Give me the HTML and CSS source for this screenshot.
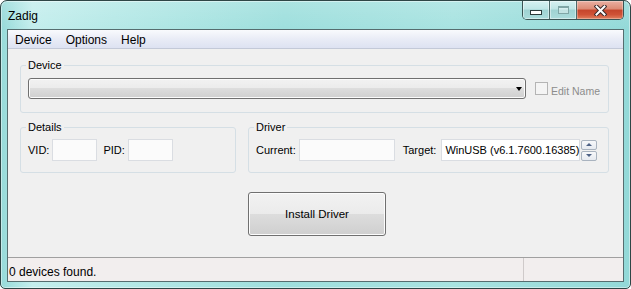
FILE: index.html
```html
<!DOCTYPE html>
<html>
<head>
<meta charset="utf-8">
<title>Zadig</title>
<link rel="stylesheet" href="styles.css">
</head>
<body>
<div class="window">
	<div class="titlebar">
		<span class="title">Zadig</span>
		<div class="caption">
			<span class="cbtn min"><i></i></span>
			<span class="cbtn max"><i></i></span>
			<span class="cbtn close">
				<svg width="13" height="11" viewBox="0 0 13 11">
					<path d="M2.5 1.5 L10.5 9.5 M10.5 1.5 L2.5 9.5" stroke="#3a2a2a" stroke-width="4" stroke-linecap="square"/>
					<path d="M2.5 1.5 L10.5 9.5 M10.5 1.5 L2.5 9.5" stroke="#fff" stroke-width="2" stroke-linecap="square"/>
				</svg>
			</span>
		</div>
	</div>
	<div class="client">
		<div class="menubar">
			<span class="menu-item">Device</span>
			<span class="menu-item">Options</span>
			<span class="menu-item">Help</span>
		</div>
		<div class="content">
			<fieldset class="grp grp-device">
				<legend>Device</legend>
				<div class="row">
					<div class="combo"><span class="arrow"></span></div>
					<label class="chk"><span class="chk-box"></span><span class="chk-text">Edit Name</span></label>
				</div>
			</fieldset>
			<div class="grp-row">
				<fieldset class="grp grp-details">
					<legend>Details</legend>
					<div class="row">
						<span class="lbl">VID:</span>
						<span class="edit edit-id"></span>
						<span class="lbl lbl-pid">PID:</span>
						<span class="edit edit-id"></span>
					</div>
				</fieldset>
				<fieldset class="grp grp-driver">
					<legend>Driver</legend>
					<div class="row">
						<span class="lbl">Current:</span>
						<span class="edit edit-current"></span>
						<span class="lbl lbl-target">Target:</span>
						<span class="edit edit-target">WinUSB (v6.1.7600.16385)</span>
						<span class="spin">
							<span class="spin-btn"><i class="up"></i></span>
							<span class="spin-btn"><i class="down"></i></span>
						</span>
					</div>
				</fieldset>
			</div>
			<div class="actions"><button class="btn">Install Driver</button></div>
		</div>
		<div class="statusbar">
			<span class="status-text">0 devices found.</span>
			<span class="status-pane"></span>
		</div>
	</div>
</div>
</body>
</html>
```

FILE: styles.css
```css
*{
	box-sizing:border-box;
	}
body{
	margin:0;
	background:#fff;
	font-family:"Liberation Sans", Arial, sans-serif;
	font-size:11px;
	color:#000;
	}
.window{
	width:631px;
	height:289px;
	display:flex;
	flex-direction:column;
	border:1px solid #2e4646;
	border-radius:7px 7px 5px 5px;
	box-shadow:inset 0 0 0 1px rgba(255,255,255,.45);
	background:
		linear-gradient(to bottom, rgba(255,255,255,.15), rgba(255,255,255,0) 28px),
		linear-gradient(to right, #96dad9 0%, #c4eeed 5%, #b6e9e7 18%, #9edfdd 45%, #a8e3e1 72%, #93d9d8 100%);
	}

/* title bar */
.titlebar{
	height:28px;
	flex:none;
	display:flex;
	justify-content:space-between;
	align-items:flex-start;
	}
.title{
	font-size:12px;
	line-height:14px;
	padding:8px 0 0 7px;
	color:#000;
	}
.caption{
	display:flex;
	height:19px;
	margin-right:6px;
	border:1px solid #3b5454;
	border-top:0;
	border-radius:0 0 5px 5px;
	overflow:hidden;
	}
.cbtn{
	height:18px;
	display:flex;
	justify-content:center;
	}
.min,.max{
	width:27px;
	border-right:1px solid #4d6a6a;
	background:linear-gradient(#d6f1f1, #bfe6e6 45%, #9fd2d2 50%, #abdcdc 100%);
	box-shadow:inset 0 0 0 1px rgba(255,255,255,.45);
	}
.min i{
	width:12px;
	height:5px;
	margin-top:9px;
	background:#fff;
	border:1px solid #2b3a3a;
	}
.max i{
	width:11px;
	height:8px;
	margin-top:5px;
	border:1px solid #7fa6a6;
	border-top-width:2px;
	background:rgba(255,255,255,.35);
	}
.close{
	width:46px;
	align-items:center;
	background:linear-gradient(#eab0a2, #dc8a74 45%, #c5452b 50%, #cf5236 75%, #e0805f 100%);
	box-shadow:inset 0 0 0 1px rgba(255,255,255,.3);
	}

/* client area */
.client{
	flex:1;
	margin:0 6px 6px;
	border:1px solid #566d6f;
	background:#f0f0f0;
	display:flex;
	flex-direction:column;
	}
.menubar{
	height:19px;
	flex:none;
	display:flex;
	padding-top:2px;
	font-size:12px;
	line-height:16px;
	background:linear-gradient(#f9fafd, #e9ecf6 50%, #dde2f2);
	border-bottom:1px solid #c3c9d8;
	}
.menu-item{
	padding:0 7px;
	}
.content{
	flex:1;
	padding:9px 14px 0 12px;
	}

/* group boxes */
.grp{
	margin:0;
	padding:6px 7px 13px;
	border:1px solid #d5dfe5;
	border-radius:3px;
	min-width:0;
	}
.grp legend{
	padding:0 2px;
	margin-left:-2px;
	font-size:11px;
	line-height:14px;
	}
.grp-row{
	display:flex;
	gap:12px;
	margin-top:7px;
	}
.grp-details,.grp-driver{
	padding:5px 7px 11px;
	}
.grp-details{
	width:216px;
	}
.grp-driver{
	width:361px;
	}
.row{
	display:flex;
	align-items:center;
	}

/* device combo */
.combo{
	width:498px;
	height:21px;
	flex:none;
	display:flex;
	align-items:center;
	justify-content:flex-end;
	padding-right:3px;
	border:1px solid #707070;
	border-radius:3px;
	background:linear-gradient(#f2f2f2, #ebebeb 50%, #dddddd 50%, #cfcfcf);
	box-shadow:inset 0 0 0 1px #fbfbfb;
	}
.arrow{
	width:0;
	height:0;
	border-left:3.5px solid transparent;
	border-right:3.5px solid transparent;
	border-top:4px solid #000;
	margin-top:1px;
	}
.chk{
	display:flex;
	align-items:center;
	margin-left:9px;
	white-space:nowrap;
	}
.chk-box{
	width:13px;
	height:13px;
	flex:none;
	border:1px solid #b4b4b4;
	background:#f4f4f4;
	}
.chk-text{
	margin-left:3px;
	padding-top:4px;
	font-size:10.5px;
	color:#8c8c8c;
	}

/* edit fields */
.lbl{
	line-height:14px;
	white-space:nowrap;
	}
.edit{
	height:22px;
	flex:none;
	border:1px solid #dadde2;
	background:#fbfbfb;
	}
.edit-id{
	width:45px;
	margin-left:3px;
	}
.lbl-pid{
	margin-left:6px;
	}
.edit-current{
	width:96px;
	margin-left:3px;
	}
.lbl-target{
	margin-left:8px;
	}
.edit-target{
	width:139px;
	margin-left:5px;
	padding-left:3px;
	line-height:20px;
	background:#fff;
	white-space:nowrap;
	}
.spin{
	display:flex;
	flex-direction:column;
	gap:1px;
	margin-left:1px;
	}
.spin-btn{
	width:16px;
	height:10px;
	display:flex;
	align-items:center;
	justify-content:center;
	border:1px solid #a9b3bf;
	border-radius:2px;
	background:linear-gradient(#f7f8fa, #e6eaf0);
	}
.spin-btn i{
	width:0;
	height:0;
	border-left:3px solid transparent;
	border-right:3px solid transparent;
	}
.spin-btn .up{
	border-bottom:3px solid #4e6286;
	}
.spin-btn .down{
	border-top:3px solid #4e6286;
	}

/* install button */
.actions{
	margin-top:19px;
	padding-left:228px;
	}
.btn{
	width:138px;
	height:44px;
	padding:0;
	font-family:"Liberation Sans", Arial, sans-serif;
	font-size:11.5px;
	color:#000;
	border:1px solid #707070;
	border-radius:3px;
	background:linear-gradient(#f2f2f2, #ebebeb 50%, #dddddd 50%, #cfcfcf);
	box-shadow:inset 0 0 0 1px #fcfcfc;
	}

/* status bar */
.statusbar{
	height:24px;
	flex:none;
	display:flex;
	border-top:1px solid #a0a0a0;
	background:#f2eeee;
	font-size:12px;
	}
.status-text{
	flex:1;
	padding:5px 0 0 1px;
	line-height:18px;
	}
.status-pane{
	width:100px;
	border-left:1px solid #cfcaca;
	}
```
